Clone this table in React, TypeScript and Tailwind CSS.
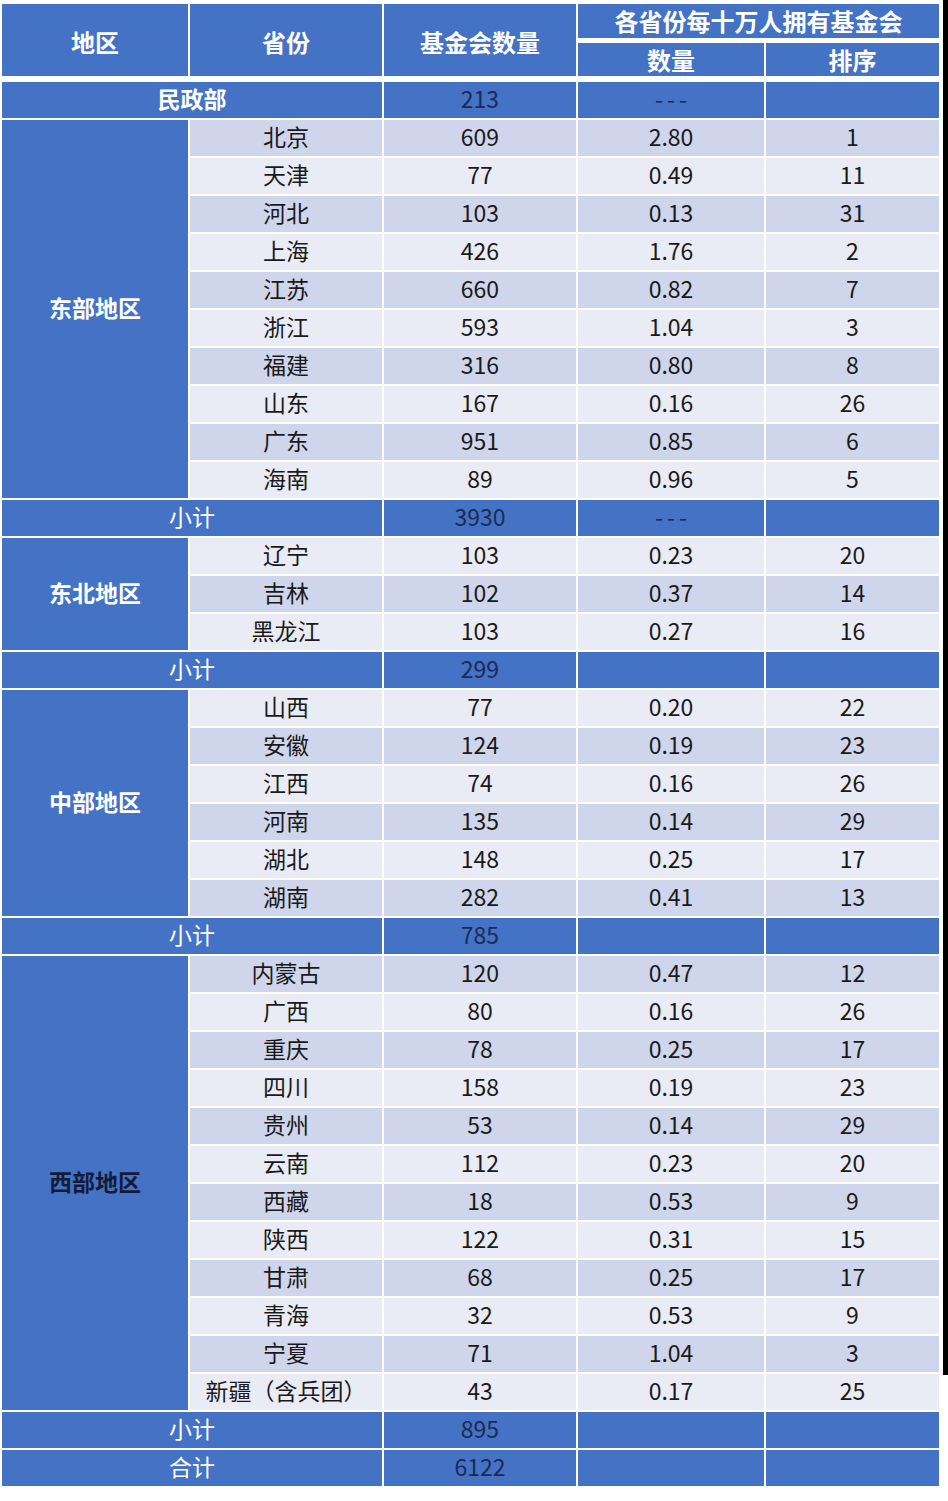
import React from "react";

type Row = { p: string; n: string; d: string; r: string };

const east: Row[] = [
  { p: "北京", n: "609", d: "2.80", r: "1" },
  { p: "天津", n: "77", d: "0.49", r: "11" },
  { p: "河北", n: "103", d: "0.13", r: "31" },
  { p: "上海", n: "426", d: "1.76", r: "2" },
  { p: "江苏", n: "660", d: "0.82", r: "7" },
  { p: "浙江", n: "593", d: "1.04", r: "3" },
  { p: "福建", n: "316", d: "0.80", r: "8" },
  { p: "山东", n: "167", d: "0.16", r: "26" },
  { p: "广东", n: "951", d: "0.85", r: "6" },
  { p: "海南", n: "89", d: "0.96", r: "5" },
];
const ne: Row[] = [
  { p: "辽宁", n: "103", d: "0.23", r: "20" },
  { p: "吉林", n: "102", d: "0.37", r: "14" },
  { p: "黑龙江", n: "103", d: "0.27", r: "16" },
];
const mid: Row[] = [
  { p: "山西", n: "77", d: "0.20", r: "22" },
  { p: "安徽", n: "124", d: "0.19", r: "23" },
  { p: "江西", n: "74", d: "0.16", r: "26" },
  { p: "河南", n: "135", d: "0.14", r: "29" },
  { p: "湖北", n: "148", d: "0.25", r: "17" },
  { p: "湖南", n: "282", d: "0.41", r: "13" },
];
const west: Row[] = [
  { p: "内蒙古", n: "120", d: "0.47", r: "12" },
  { p: "广西", n: "80", d: "0.16", r: "26" },
  { p: "重庆", n: "78", d: "0.25", r: "17" },
  { p: "四川", n: "158", d: "0.19", r: "23" },
  { p: "贵州", n: "53", d: "0.14", r: "29" },
  { p: "云南", n: "112", d: "0.23", r: "20" },
  { p: "西藏", n: "18", d: "0.53", r: "9" },
  { p: "陕西", n: "122", d: "0.31", r: "15" },
  { p: "甘肃", n: "68", d: "0.25", r: "17" },
  { p: "青海", n: "32", d: "0.53", r: "9" },
  { p: "宁夏", n: "71", d: "1.04", r: "3" },
  { p: "新疆（含兵团）", n: "43", d: "0.17", r: "25" },
];

const cell = "flex items-center justify-center pb-[4px]";
const hcell = "flex items-center justify-center";
const blue = "bg-[#4472c4]";

function Dashes() {
  return <span className="tracking-[4px] pl-[4px]">---</span>;
}

function DataRows({ rows, startDark }: { rows: Row[]; startDark: boolean }) {
  return (
    <>
      {rows.map((r, i) => {
        const dark = startDark ? i % 2 === 0 : i % 2 === 1;
        const bg = dark ? "bg-[#cfd5ea]" : "bg-[#e9ebf5]";
        return (
          <React.Fragment key={r.p}>
            <div className={`${cell} ${bg} text-[#1a1a1a]`}>{r.p}</div>
            <div className={`${cell} ${bg} text-[#1a1a1a]`}>{r.n}</div>
            <div className={`${cell} ${bg} text-[#1a1a1a]`}>{r.d}</div>
            <div className={`${cell} ${bg} text-[#1a1a1a]`}>{r.r}</div>
          </React.Fragment>
        );
      })}
    </>
  );
}

function Subtotal({ label, n, dash }: { label: string; n: string; dash?: boolean }) {
  return (
    <>
      <div className={`${cell} ${blue} col-span-2 text-white`}>{label}</div>
      <div className={`${cell} ${blue} text-[#1c2a56]`}>{n}</div>
      <div className={`${cell} ${blue} text-[#1c2a56]`}>{dash ? <Dashes /> : null}</div>
      <div className={`${blue}`}></div>
    </>
  );
}

export default function App() {
  return (
    <div
      className="flex w-[948px] bg-white text-[23px] leading-none"
      style={{ fontFamily: '"Noto Sans CJK SC", "Noto Sans", sans-serif' }}
    >
      <div className="w-[943px] pl-[2px] pt-[4px] pb-[14px]">
        {/* header */}
        <div className="grid grid-cols-[186px_192px_192px_186px_173px] grid-rows-[34px_33px] gap-x-[2px] gap-y-[5px] text-[24px] font-bold text-white">
          <div className={`${hcell} ${blue} row-span-2 pt-[4px]`}>地区</div>
          <div className={`${hcell} ${blue} row-span-2 pt-[4px]`}>省份</div>
          <div className={`${hcell} ${blue} row-span-2 pt-[4px]`}>基金会数量</div>
          <div className={`${hcell} ${blue} col-span-2`}>各省份每十万人拥有基金会</div>
          <div className={`${hcell} ${blue}`}>数量</div>
          <div className={`${hcell} ${blue}`}>排序</div>
        </div>
        {/* body */}
        <div className="mt-[6px] grid grid-cols-[186px_192px_192px_186px_173px] auto-rows-[36px] gap-[2px]">
          <div className={`${cell} ${blue} col-span-2 font-bold text-white`}>民政部</div>
          <div className={`${cell} ${blue} text-[#1c2a56]`}>213</div>
          <div className={`${cell} ${blue} text-[#1c2a56]`}>
            <Dashes />
          </div>
          <div className={blue}></div>

          <div className={`${cell} ${blue} row-span-10 font-bold text-white`}>东部地区</div>
          <DataRows rows={east} startDark={true} />
          <Subtotal label="小计" n="3930" dash />

          <div className={`${cell} ${blue} row-span-3 font-bold text-white`}>东北地区</div>
          <DataRows rows={ne} startDark={false} />
          <Subtotal label="小计" n="299" />

          <div className={`${cell} ${blue} row-span-6 font-bold text-white`}>中部地区</div>
          <DataRows rows={mid} startDark={false} />
          <Subtotal label="小计" n="785" />

          <div className={`${cell} ${blue} row-span-12 font-bold text-[#141b3a]`}>西部地区</div>
          <DataRows rows={west} startDark={true} />
          <Subtotal label="小计" n="895" />
          <Subtotal label="合计" n="6122" />
        </div>
      </div>
      <div className="h-[1375px] w-[5px] bg-black"></div>
    </div>
  );
}
